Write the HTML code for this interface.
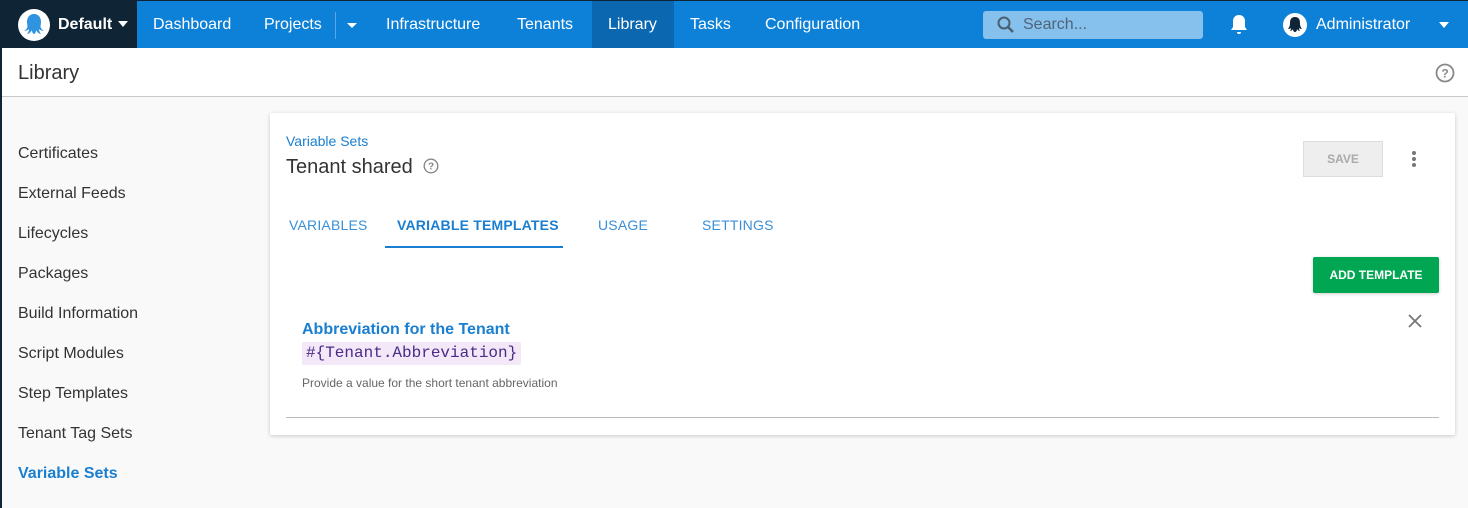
<!DOCTYPE html>
<html><head><style>
*{box-sizing:border-box;margin:0;padding:0}
body{width:1468px;height:508px;overflow:hidden;background:#f9f9f9;font-family:"Liberation Sans",Arial,sans-serif;position:relative}
.nav{position:absolute;left:0;top:0;width:1468px;height:48px;background:#0d80d8;border-top:1px solid #0f2535;color:#fff;font-size:16px}
.nav span{position:absolute;top:15px}
.dark{position:absolute;left:0;top:0;width:137px;height:47px;background:#0f2535}
.hdr{position:absolute;left:0;top:48px;width:1468px;height:49px;background:#fff;border-bottom:1px solid #c8c8c8}
.side{position:absolute;left:18px;font-size:16px;color:#333}
.card{position:absolute;left:270px;top:113px;width:1185px;height:322px;background:#fff;box-shadow:0 1px 4px rgba(0,0,0,.2);border-radius:2px}
.tab{position:absolute;top:104px;font-size:14px;color:#3a8fd8;letter-spacing:.2px}
</style></head><body>
<div style="position:absolute;left:0;top:0;width:2px;height:508px;background:#0f2535;z-index:5"></div>
<div class="nav">
<div class="dark"></div>
<div style="position:absolute;left:18px;top:8px;width:32px;height:32px;border-radius:50%;background:#fff"><svg width="32" height="32" viewBox="0 0 32 32"><path d="M16 5c-5 0-7 4-7 8 0 3 1 4 0 6-1 2-3 3-3 3 2 0 4-1 5-2 0 2-1 4-2 5 2 0 4-2 5-4 0 2 1 4 2 4s2-2 2-4c1 2 3 4 5 4-1-1-2-3-2-5 1 1 3 2 5 2 0 0-2-1-3-3-1-2 0-3 0-6 0-4-2-8-7-8z" fill="#2f93e0"/></svg></div>
<span style="left:58px;font-weight:bold">Default</span>
<svg style="position:absolute;left:118px;top:20px" width="10" height="6"><path d="M0 0h10L5 6z" fill="#fff"/></svg>
<div style="position:absolute;left:592px;top:0;width:82px;height:47px;background:#0a67b0"></div>
<span style="left:153px">Dashboard</span><span style="left:264px">Projects</span>
<div style="position:absolute;left:335px;top:11px;width:1px;height:27px;background:#5aa6e6"></div>
<svg style="position:absolute;left:347px;top:22px" width="10" height="5"><path d="M0 0h10L5 5z" fill="#fff"/></svg>
<span style="left:386px">Infrastructure</span><span style="left:517px">Tenants</span><span style="left:608px">Library</span><span style="left:690px">Tasks</span><span style="left:765px">Configuration</span>
<div style="position:absolute;left:983px;top:10px;width:220px;height:28px;background:#86c0ec;border-radius:3px"></div>
<svg style="position:absolute;left:997px;top:15px" width="18" height="18"><circle cx="7" cy="7" r="5.5" stroke="#4a5f70" stroke-width="2" fill="none"/><path d="M11 11l5 5" stroke="#4a5f70" stroke-width="2.5"/></svg>
<span style="left:1023px;color:#50657a;top:15px">Search...</span>
<svg style="position:absolute;left:1229px;top:13px" width="20" height="21"><path d="M10 1c-4 0-6 3-6 6v6l-2 3h16l-2-3V7c0-3-2-6-6-6zM8 18h4a2 2 0 0 1-4 0z" fill="#fff"/></svg>
<div style="position:absolute;left:1283px;top:12px;width:24px;height:24px;border-radius:50%;background:#fff"><svg width="24" height="24"><path d="M12 4c-4 0-5 3-5 6 0 2 0 3-2 6 2 0 3-1 3-1 0 2-1 3-1 3 2 0 3-2 3-2 0 2 1 3 2 3s2-1 2-3c0 0 1 2 3 2 0 0-1-1-1-3 0 0 1 1 3 1-2-3-2-4-2-6 0-3-1-6-5-6z" fill="#0f2535"/></svg></div>
<span style="left:1316px">Administrator</span>
<svg style="position:absolute;left:1439px;top:21px" width="10" height="6"><path d="M0 0h10L5 6z" fill="#fff"/></svg>
</div>
<div class="hdr"><span style="position:absolute;left:18px;top:14px;font-size:20px;color:#333">Library</span>
<svg style="position:absolute;left:1435px;top:15px" width="20" height="20"><circle cx="10" cy="10" r="8.5" stroke="#888" stroke-width="1.8" fill="none"/><text x="10" y="14.5" text-anchor="middle" font-size="12" font-weight="bold" fill="#888" font-family="Liberation Sans">?</text></svg></div>
<div class="side" style="top:145px">Certificates</div>
<div class="side" style="top:185px">External Feeds</div>
<div class="side" style="top:225px">Lifecycles</div>
<div class="side" style="top:265px">Packages</div>
<div class="side" style="top:305px">Build Information</div>
<div class="side" style="top:345px">Script Modules</div>
<div class="side" style="top:385px">Step Templates</div>
<div class="side" style="top:425px">Tenant Tag Sets</div>
<div class="side" style="top:465px;color:#1a7fd0;font-weight:bold">Variable Sets</div>
<div class="card">
<div style="position:absolute;left:16px;top:20px;font-size:14px;color:#1a7fd0">Variable Sets</div>
<div style="position:absolute;left:16px;top:43px;font-size:20px;color:#333">Tenant shared</div>
<svg style="position:absolute;left:153px;top:45px" width="16" height="16"><circle cx="8" cy="8" r="6.8" stroke="#888" stroke-width="1.4" fill="none"/><text x="8" y="11.5" text-anchor="middle" font-size="10" font-weight="bold" fill="#888" font-family="Liberation Sans">?</text></svg>
<div style="position:absolute;left:1033px;top:28px;width:80px;height:36px;background:#eee;border:1px solid #ddd;font-size:12px;font-weight:bold;color:#aaa;text-align:center;line-height:34px">SAVE</div>
<svg style="position:absolute;left:1141px;top:37px" width="6" height="18"><circle cx="3" cy="3" r="2" fill="#777"/><circle cx="3" cy="9" r="2" fill="#777"/><circle cx="3" cy="15" r="2" fill="#777"/></svg>
<div class="tab" style="left:19px">VARIABLES</div>
<div class="tab" style="left:127px;color:#1a7fd0;font-weight:bold">VARIABLE TEMPLATES</div>
<div style="position:absolute;left:115px;top:133px;width:178px;height:2px;background:#1a7fd0"></div>
<div class="tab" style="left:328px">USAGE</div>
<div class="tab" style="left:432px">SETTINGS</div>
<div style="position:absolute;left:1043px;top:144px;width:126px;height:36px;background:#00a651;border-radius:2px;color:#fff;font-size:12px;font-weight:bold;text-align:center;line-height:36px;box-shadow:0 1px 3px rgba(0,0,0,.2)">ADD TEMPLATE</div>
<div style="position:absolute;left:32px;top:208px;font-size:16px;font-weight:bold;color:#1a7fd0">Abbreviation for the Tenant</div>
<div style="position:absolute;left:32px;top:229px;height:23px;padding:2px 4px;background:#f2e8f8;border-radius:2px;font-family:'Liberation Mono',monospace;font-size:16px;color:#4b2a8a">#{Tenant.Abbreviation}</div>
<div style="position:absolute;left:32px;top:263px;font-size:12px;color:#666">Provide a value for the short tenant abbreviation</div>
<svg style="position:absolute;left:1138px;top:201px" width="14" height="14"><path d="M1 1l12 12M13 1L1 13" stroke="#777" stroke-width="1.8"/></svg>
<div style="position:absolute;left:16px;top:304px;width:1153px;height:1px;background:#bbb"></div>
</div>
</body></html>
